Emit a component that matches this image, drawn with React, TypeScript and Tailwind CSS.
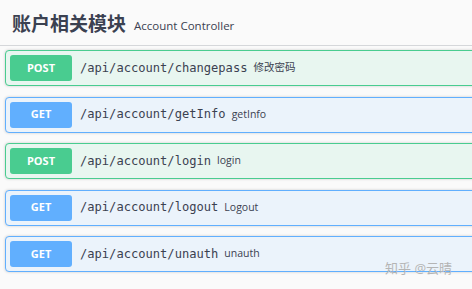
const ops = [
  { method: "POST", path: "/api/account/changepass", desc: "修改密码" },
  { method: "GET", path: "/api/account/getInfo", desc: "getInfo" },
  { method: "POST", path: "/api/account/login", desc: "login" },
  { method: "GET", path: "/api/account/logout", desc: "Logout" },
  { method: "GET", path: "/api/account/unauth", desc: "unauth" },
];

function OpRow({ method, path, desc }: { method: string; path: string; desc: string }) {
  const post = method === "POST";
  return (
    <div
      className={
        post
          ? "flex h-[36px] w-[480px] items-center rounded border border-[#49cc90] bg-[#e8f6f0] pl-[4px] shadow-[0_0_3px_rgba(0,0,0,0.19)]"
          : "flex h-[36px] w-[480px] items-center rounded border border-[#61affe] bg-[#ebf3fb] pl-[4px] shadow-[0_0_3px_rgba(0,0,0,0.19)]"
      }
    >
      <span
        className={
          post
            ? "flex h-[26px] w-[62px] items-center justify-center rounded-[3px] bg-[#49cc90] text-[11px] font-bold text-white"
            : "flex h-[26px] w-[62px] items-center justify-center rounded-[3px] bg-[#61affe] text-[11px] font-bold text-white"
        }
      >
        {method}
      </span>
      <span className="ml-[8px] font-['DejaVu_Sans_Mono',monospace] text-[12.1px] text-[#3b4151]">
        {path}
      </span>
      <span className="ml-[6px] text-[10.5px] text-[#3b4151]">{desc}</span>
    </div>
  );
}

export default function App() {
  return (
    <div className="relative h-[289px] w-[472px] overflow-hidden bg-[#fafafa] font-['Open_Sans','Noto_Sans_CJK_SC',sans-serif]">
      {/* Tag header */}
      <div className="flex h-[46px] items-center border-b border-[#d5d7da] pl-[12px] pt-[4px]">
        <h3 className="text-[19px] font-bold text-[#3b4151]">账户相关模块</h3>
        <span className="ml-[8px] mt-[2px] text-[11.5px] text-[#3b4151]">Account Controller</span>
      </div>

      {/* Operations */}
      <div className="flex flex-col gap-[10.5px] pl-[5px] pt-[4px]">
        {ops.map((op) => (
          <OpRow key={op.path} {...op} />
        ))}
      </div>

      {/* watermark */}
      <div className="absolute left-[385px] top-[259px] text-[13px] text-[#b5b5b5]">知乎 @云晴</div>
    </div>
  );
}
